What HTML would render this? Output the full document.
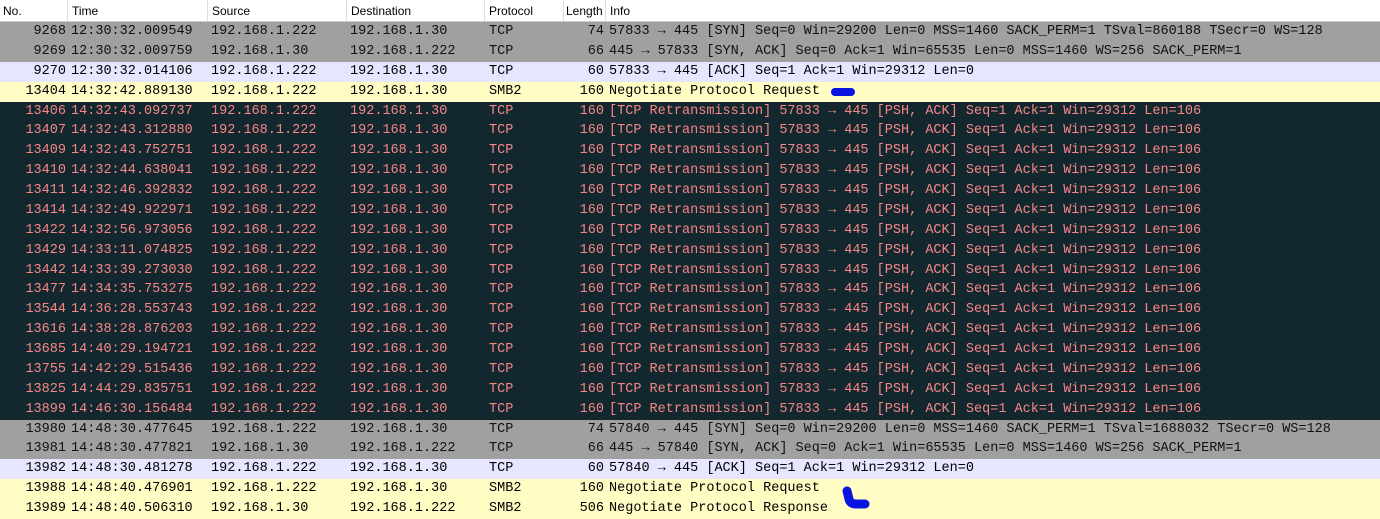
<!DOCTYPE html>
<html><head><meta charset="utf-8"><style>
body{margin:0;width:1380px;height:518px;overflow:hidden;background:#fff;position:relative}
.h{position:absolute;top:0;left:0;width:1380px;height:21px;background:#fff;border-bottom:1px solid #ccc;font:12px "Liberation Sans",sans-serif;color:#000}
.h span{position:absolute;top:4px}
.h i{position:absolute;top:0;width:1px;height:21px;background:#ddd}
.r{position:absolute;left:0;width:1380px;height:20px;font:13.52px/20px "Liberation Mono",monospace;white-space:pre;color:#000}
.r span{position:absolute;top:0}
.no{right:1314px;text-align:right}
.ln{right:776px;text-align:right}
.g{background:#a0a0a0;color:#111}
.l{background:#e7e6ff}
.y{background:#fffdc4}
.d{background:#12272e;color:#f78787}
</style></head><body>
<div class="h"><span style="left:3px">No.</span><i style="left:67px"></i><span style="left:72px">Time</span><i style="left:207px"></i><span style="left:212px">Source</span><i style="left:346px"></i><span style="left:351px">Destination</span><i style="left:484px"></i><span style="left:489px">Protocol</span><i style="left:563px"></i><span style="left:566px">Length</span><i style="left:605px"></i><span style="left:610px">Info</span></div>
<div id="rows"></div>
<div style="position:absolute;left:831px;top:88px;width:24px;height:8px;background:#0a14e0;border-radius:5px"></div>
<svg style="position:absolute;left:838px;top:484px" width="34" height="28"><path d="M9 7 L11 15 Q12 20 18 20 L27 20" stroke="#0a14e0" stroke-width="9" fill="none" stroke-linecap="round" stroke-linejoin="round"/></svg>
<script>
var rows=[
["g","9268","12:30:32.009549","192.168.1.222","192.168.1.30","TCP","74","57833 → 445 [SYN] Seq=0 Win=29200 Len=0 MSS=1460 SACK_PERM=1 TSval=860188 TSecr=0 WS=128"],
["g","9269","12:30:32.009759","192.168.1.30","192.168.1.222","TCP","66","445 → 57833 [SYN, ACK] Seq=0 Ack=1 Win=65535 Len=0 MSS=1460 WS=256 SACK_PERM=1"],
["l","9270","12:30:32.014106","192.168.1.222","192.168.1.30","TCP","60","57833 → 445 [ACK] Seq=1 Ack=1 Win=29312 Len=0"],
["y","13404","14:32:42.889130","192.168.1.222","192.168.1.30","SMB2","160","Negotiate Protocol Request"]];
var d=[["13406","14:32:43.092737"],["13407","14:32:43.312880"],["13409","14:32:43.752751"],["13410","14:32:44.638041"],["13411","14:32:46.392832"],["13414","14:32:49.922971"],["13422","14:32:56.973056"],["13429","14:33:11.074825"],["13442","14:33:39.273030"],["13477","14:34:35.753275"],["13544","14:36:28.553743"],["13616","14:38:28.876203"],["13685","14:40:29.194721"],["13755","14:42:29.515436"],["13825","14:44:29.835751"],["13899","14:46:30.156484"]];
d.forEach(function(x){rows.push(["d",x[0],x[1],"192.168.1.222","192.168.1.30","TCP","160","[TCP Retransmission] 57833 → 445 [PSH, ACK] Seq=1 Ack=1 Win=29312 Len=106"])});
rows.push(["g","13980","14:48:30.477645","192.168.1.222","192.168.1.30","TCP","74","57840 → 445 [SYN] Seq=0 Win=29200 Len=0 MSS=1460 SACK_PERM=1 TSval=1688032 TSecr=0 WS=128"]);
rows.push(["g","13981","14:48:30.477821","192.168.1.30","192.168.1.222","TCP","66","445 → 57840 [SYN, ACK] Seq=0 Ack=1 Win=65535 Len=0 MSS=1460 WS=256 SACK_PERM=1"]);
rows.push(["l","13982","14:48:30.481278","192.168.1.222","192.168.1.30","TCP","60","57840 → 445 [ACK] Seq=1 Ack=1 Win=29312 Len=0"]);
rows.push(["y","13988","14:48:40.476901","192.168.1.222","192.168.1.30","SMB2","160","Negotiate Protocol Request"]);
rows.push(["y","13989","14:48:40.506310","192.168.1.30","192.168.1.222","SMB2","506","Negotiate Protocol Response"]);
var h="";
rows.forEach(function(r,i){var t=(22+i*19.88).toFixed(2);
h+='<div class="r '+r[0]+'" style="top:'+t+'px"><span class="no">'+r[1]+'</span><span style="left:71px">'+r[2]+'</span><span style="left:211px">'+r[3]+'</span><span style="left:350px">'+r[4]+'</span><span style="left:489px">'+r[5]+'</span><span class="ln">'+r[6]+'</span><span style="left:609px">'+r[7]+'</span></div>';});
document.getElementById("rows").innerHTML=h;
</script>
</body></html>
